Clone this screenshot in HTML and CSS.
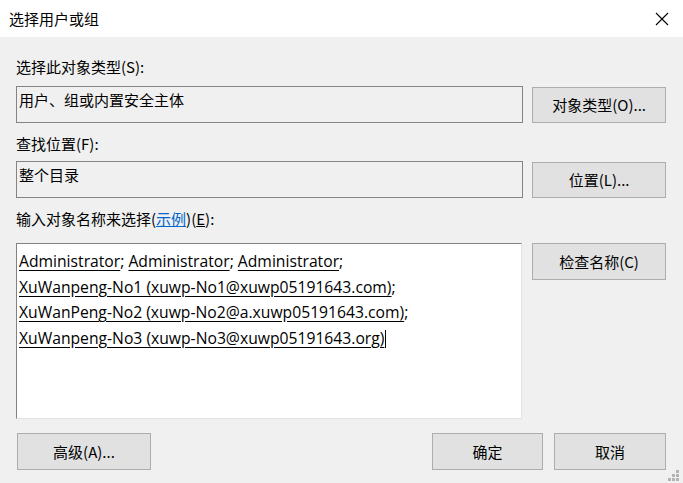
FILE: index.html
```html
<!DOCTYPE html>
<html lang="zh-CN">
<head>
<meta charset="utf-8">
<title>选择用户或组</title>
<link rel="stylesheet" href="styles.css">
</head>
<body>
<div class="dialog">
  <div class="titlebar">
    <span class="title">选择用户或组</span>
    <svg class="close" width="14" height="14" viewBox="0 0 14 14"><path d="M1 1 L13 13 M13 1 L1 13" stroke="#000" stroke-width="1.1" fill="none"/></svg>
  </div>
  <div class="content">
    <div class="label first">选择此对象类型(S):</div>
    <div class="row">
      <div class="field">用户、组或内置安全主体</div>
      <div class="btn side">对象类型(O)...</div>
    </div>
    <div class="label">查找位置(F):</div>
    <div class="row tight">
      <div class="field">整个目录</div>
      <div class="btn side">位置(L)...</div>
    </div>
    <div class="label">输入对象名称来选择(<span class="link">示例</span>)(<u>E</u>):</div>
    <div class="row names">
      <div class="editor">
        <div class="line"><u>Administrator</u>; <u>Administrator</u>; <u>Administrator</u>;</div>
        <div class="line"><u>XuWanpeng-No1 (xuwp-No1@xuwp05191643.com)</u>;</div>
        <div class="line"><u>XuWanPeng-No2 (xuwp-No2@a.xuwp05191643.com)</u>;</div>
        <div class="line"><u>XuWanpeng-No3 (xuwp-No3@xuwp05191643.org)</u><span class="caret"></span></div>
      </div>
      <div class="btn side check">检查名称(C)</div>
    </div>
    <div class="footer">
      <div class="btn adv">高级(A)...</div>
      <div class="spacer"></div>
      <div class="btn ok">确定</div>
      <div class="btn cancel">取消</div>
    </div>
  </div>
  <div class="grip">
    <i style="left:8px;top:0"></i>
    <i style="left:4px;top:4px"></i><i style="left:8px;top:4px"></i>
    <i style="left:0;top:8px"></i><i style="left:4px;top:8px"></i><i style="left:8px;top:8px"></i>
  </div>
</div>
</body>
</html>
```

FILE: styles.css
```css
* { box-sizing: border-box; }
html, body { margin: 0; padding: 0; }
body {
  width: 683px;
  height: 483px;
  overflow: hidden;
  background: #f0f0f0;
  font-family: "Noto Sans CJK SC", "Noto Sans", sans-serif;
  font-size: 15px;
  color: #000;
}
.dialog {
  position: relative;
  width: 683px;
  height: 483px;
}
.titlebar {
  height: 37px;
  background: #fff;
  display: flex;
  align-items: center;
  padding: 0 0 0 9px;
}
.title { flex: 1; line-height: 20px; padding-top: 1px; }
.close { margin-right: 14px; margin-top: 1px; }
.content {
  padding: 0 17px 0 16px;
}
.label {
  line-height: 20px;
  height: 20px;
  margin-top: 11px;
  white-space: nowrap;
}
.label.first { margin-top: 20px; }
.link { color: #0066cc; text-decoration: underline; }
.row {
  display: flex;
  align-items: flex-start;
  margin-top: 9px;
}
.row.tight { margin-top: 7px; }
.row.names { margin-top: 14px; }
.field {
  width: 508px;
  height: 37px;
  border: 1px solid #848484;
  padding: 3px 0 0 2px;
  line-height: 20px;
}
.btn {
  height: 37px;
  background: #e1e1e1;
  border: 1px solid #adadad;
  display: flex;
  align-items: center;
  justify-content: center;
  line-height: 20px;
  white-space: nowrap;
}
.side {
  width: 134px;
  margin-left: 9px;
  margin-top: 1px;
  height: 36px;
}
.side.check { margin-left: 10px; margin-top: 0; height: 37px; }
.editor {
  width: 507px;
  height: 176px;
  background: #fff;
  border-style: solid;
  border-width: 1px;
  border-color: #828282 #e3e3e3 #e3e3e3 #828282;
  padding: 5px 0 0 2px;
  font-family: "Open Sans", "Noto Sans CJK SC", sans-serif;
  font-size: 15.7px;
}
.line {
  height: 25.5px;
  line-height: 25.5px;
  white-space: nowrap;
}
.line u { text-underline-offset: 3px; }
.caret {
  display: inline-block;
  width: 1px;
  height: 18px;
  background: #000;
  vertical-align: -4px;
  margin-left: 1px;
}
.footer {
  display: flex;
  margin-top: 14px;
  padding-left: 1px;
}
.spacer { flex: 1; }
.adv { width: 134px; }
.ok { width: 111px; }
.cancel { width: 112px; margin-left: 11px; }
.grip {
  position: absolute;
  right: 4px;
  bottom: 2px;
  width: 11px;
  height: 11px;
}
.grip i {
  position: absolute;
  width: 3px;
  height: 3px;
  background: #b4b4b4;
}
```
